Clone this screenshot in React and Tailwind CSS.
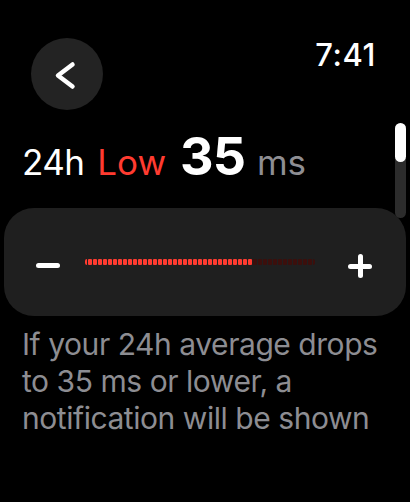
import React from 'react'

const RED = 33
const DIM = 12

function LevelBar() {
  return (
    <div className="flex items-center h-[6px] gap-px">
      <div className="w-[2px] h-[6px] rounded-l-full bg-[#ff3b30]" />
      {Array.from({ length: RED }).map((_, i) => (
        <div key={'r' + i} className="w-[4px] h-[6px] rounded-[1px] bg-[#ff3b30]" />
      ))}
      {Array.from({ length: DIM }).map((_, i) => (
        <div key={'d' + i} className="w-[4px] h-[6px] rounded-[1px] bg-[#3b0f0c]" />
      ))}
      <div className="w-[2px] h-[6px] rounded-r-full bg-[#3b0f0c]" />
    </div>
  )
}

export default function App() {
  return (
    <div className="relative w-[410px] h-[502px] overflow-hidden bg-black text-white" style={{ fontFamily: 'Inter, "Noto Sans", sans-serif' }}>
      {/* Header */}
      <div className="flex items-start justify-between pt-[38px] pl-[31px] pr-[34px]">
        <button className="w-[72px] h-[72px] rounded-full bg-[#232323] flex items-center justify-center">
          <svg width="72" height="72" viewBox="0 0 72 72" fill="none">
            <path d="M41.5 26.5 L27 37.5 L41.5 48.5" stroke="white" strokeWidth="4.5" strokeLinecap="round" strokeLinejoin="round" />
          </svg>
        </button>
        <span className="mt-[1px] text-[31px] leading-none font-medium tracking-[0.6px]">7:41</span>
      </div>

      {/* Heading */}
      <div className="flex items-baseline mt-[21px] pl-[22px] leading-none">
        <span className="text-[35px] tracking-[-0.6px]">24h</span>
        <span className="text-[35px] text-[#ff3b30] ml-[13px]">Low</span>
        <span className="text-[52px] font-bold ml-[14px] tracking-[-1px]">35</span>
        <span className="text-[35px] text-[#8e8e93] ml-[12px]">ms</span>
      </div>

      {/* Stepper card */}
      <div className="mt-[25px] mx-[4px] h-[108px] rounded-[30px] bg-[#1f1f1f] flex items-center">
        <div className="ml-[32px] w-[24px] h-[5px] rounded-full bg-white mt-[6px]" />
        <div className="ml-[25px]">
          <LevelBar />
        </div>
        <div className="ml-[33px] relative w-[24px] h-[24px] mt-[8px]">
          <div className="absolute left-0 top-[9.5px] w-[24px] h-[5px] rounded-full bg-white" />
          <div className="absolute top-0 left-[9.5px] w-[5px] h-[24px] rounded-full bg-white" />
        </div>
      </div>

      {/* Description */}
      <p className="mt-[10px] pl-[22px] pr-[20px] text-[30px] leading-[37px] tracking-[-0.45px] text-[#8d8d92]">
        If your 24h average drops to 35 ms or lower, a notification will be shown
      </p>

      {/* Scroll indicator */}
      <div className="absolute left-[395px] top-[123px] w-[11px] h-[95px] rounded-full bg-[#2c2c2c]">
        <div className="w-[11px] h-[39px] rounded-full bg-white" />
      </div>
    </div>
  )
}
